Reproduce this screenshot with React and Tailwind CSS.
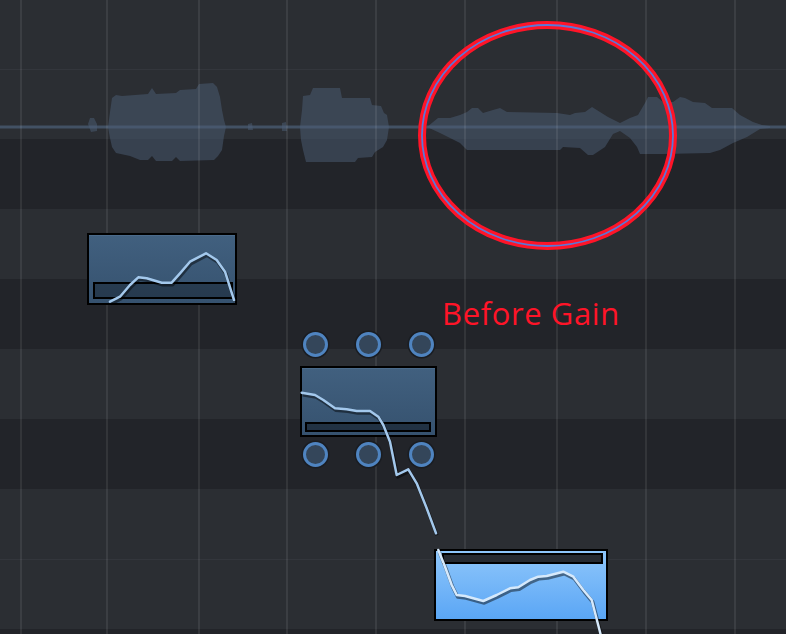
const rows = [
  { h: "h-[69px]", bg: "bg-[#2b2e33]", line: false },
  { h: "h-[70px]", bg: "bg-[#2b2e33]", line: true },
  { h: "h-[70px]", bg: "bg-[#222429]", line: false },
  { h: "h-[70px]", bg: "bg-[#2b2e33]", line: false },
  { h: "h-[70px]", bg: "bg-[#222429]", line: false },
  { h: "h-[70px]", bg: "bg-[#2b2e33]", line: false },
  { h: "h-[70px]", bg: "bg-[#222429]", line: false },
  { h: "h-[70px]", bg: "bg-[#2b2e33]", line: false },
  { h: "h-[70px]", bg: "bg-[#2b2e33]", line: true },
  { h: "h-[70px]", bg: "bg-[#222429]", line: false },
];

const cols = ["w-[86px]", "w-[92px]", "w-[88px]", "w-[89px]", "w-[89px]", "w-[92px]", "w-[89px]", "w-[89px]"];

// waveform shapes
const blob1 =
  "M108,127 L110,112 L112,98 L116,95 L122,96 L148,94 L152,88 L156,94 L176,93 L180,90 L196,89 L199,84 L213,83 L217,87 L220,97 L222,110 L224,120 L226,127 L224,136 L222,150 L218,156 L214,160 L180,161 L176,157 L172,161 L156,161 L152,156 L148,160 L140,160 L130,156 L116,153 L112,147 L110,138 Z";
const blob2 =
  "M300,127 L302,110 L303,96 L310,95 L313,88 L340,88 L342,98 L370,98 L372,105 L381,106 L384,113 L387,115 L389,127 L387,140 L383,147 L375,152 L372,157 L358,158 L355,162 L306,162 L303,150 L301,140 Z";
const blob3 =
  "M427,127 L438,118 L450,118 L460,115 L467,112 L472,108 L478,108 L483,113 L493,110 L500,108 L507,112 L557,113 L570,115 L575,113 L585,112 L592,107 L600,112 L608,117 L620,123 L630,118 L638,115 L645,103 L648,97 L657,97 L663,102 L673,102 L680,97 L685,98 L693,102 L705,103 L712,108 L732,108 L740,115 L753,122 L762,125 L770,126 L770,128 L760,129 L747,137 L733,143 L720,150 L710,153 L663,154 L640,154 L637,147 L630,138 L620,131 L613,134 L605,147 L593,155 L588,155 L580,148 L563,147 L560,150 L467,150 L460,143 L440,133 Z";
const bumps =
  "M88,124 L90,118 L94,118 L97,124 L97,131 L91,132 Z M248,124 L252,123 L253,130 L248,130 Z M282,123 L286,122 L287,131 L282,131 Z";

// pitch curves
const curve1 = "110,301.7 120,296.7 130,285 138.3,277.3 146.7,278.3 161.7,282.7 171.7,282.7 180,273.3 190,261.7 206,253.3 216.7,260 225,271.7 234,300";
const curve2 = "301.7,392.7 315,395 323.3,400 335,408.3 346.7,409.3 356.7,411 370,411 378.3,416.7 383.3,425 390,441.7 396.7,475 408.3,469.3 416.7,483.3 426.7,508.3 436,533.3";
const curve3 = "438.3,550 445,566.7 451.7,585 456.7,595 465,596 483.3,601 496.7,595 510,588.3 518.3,587.3 530,580 538.3,576.7 546.7,576 563.3,571.7 573.3,576.7 583.3,590 591.7,600 599.3,629.3 601,636";

const Curve = ({ points, color }) => (
  <g>
    <polyline points={points} fill="none" stroke="rgba(0,0,0,0.45)" strokeWidth="3.5" strokeLinejoin="round" transform="translate(1,2)" />
    <polyline points={points} fill="none" stroke={color} strokeWidth="2.5" strokeLinejoin="round" strokeLinecap="round" />
  </g>
);

const Handle = () => (
  <div className="w-[25px] h-[25px] rounded-full bg-[#34465a] border-[3px] border-[#4f84c0] shadow-[0_0_0_1.5px_#1a1d22]" />
);

const HandleRow = ({ className }) => (
  <div className={`flex justify-between px-[3px] ${className}`}>
    <Handle />
    <Handle />
    <Handle />
  </div>
);

const App = () => {
  return (
    <div className="relative w-[786px] h-[634px] overflow-hidden bg-[#2b2e33] font-['Open_Sans',sans-serif]">
      <div className="flex flex-col">
        {rows.map((r, i) => (
          <div key={i} className={`${r.h} ${r.bg} ${r.line ? "border-t border-[#33363c]" : ""} shrink-0`} />
        ))}
      </div>

      <svg className="absolute inset-0" width="786" height="634" viewBox="0 0 786 634">
        <rect x="0" y="125.5" width="786" height="3" fill="rgba(75,94,117,0.75)" />
        <path d={blob1} fill="rgba(75,94,117,0.5)" />
        <path d={blob2} fill="rgba(75,94,117,0.5)" />
        <path d={blob3} fill="rgba(75,94,117,0.5)" />
        <path d={bumps} fill="rgba(75,94,117,0.5)" />
      </svg>

      <div className="absolute inset-0 flex pl-[20px]">
        {cols.map((c, i) => (
          <div key={i} className={`${c} h-full border-l-2 border-white/[0.08] shrink-0`} />
        ))}
        <div className="flex-1 h-full border-l-2 border-white/[0.08]" />
      </div>

      {/* note 1 */}
      <div className="absolute left-[87px] top-[233px] w-[150px] h-[72px] border-2 border-black bg-gradient-to-b from-[#41607f] to-[#36526f] shadow-[inset_0_1px_0_#5677997a] flex flex-col justify-end pl-[4px] pb-[4px]">
        <div className="w-[140px] h-[17px] border-2 border-black bg-black/30" />
      </div>

      {/* note 2 with handles */}
      <div className="absolute left-[300px] top-[332px] w-[137px] flex flex-col">
        <HandleRow className="mb-[9px]" />
        <div className="h-[71px] border-2 border-black bg-gradient-to-b from-[#41607f] to-[#36526f] shadow-[inset_0_1px_0_#5677997a] flex flex-col justify-end pl-[3px] pb-[3px]">
          <div className="w-[126px] h-[10px] border-2 border-black bg-black/40" />
        </div>
        <HandleRow className="mt-[5px]" />
      </div>

      {/* note 3 */}
      <div className="absolute left-[434px] top-[549px] w-[174px] h-[72px] border-2 border-black bg-gradient-to-b from-[#8ec6fa] to-[#5aa6f5] pl-[6px] pt-[2px]">
        <div className="w-[161px] h-[11px] border-2 border-black bg-[#262a30]" />
      </div>

      <svg className="absolute inset-0" width="786" height="634" viewBox="0 0 786 634">
        <Curve points={curve1} color="#a3c8ec" />
        <Curve points={curve2} color="#a3c8ec" />
        <Curve points={curve3} color="#d6e9fb" />
        <ellipse cx="547.5" cy="135.5" rx="125.5" ry="110.5" fill="none" stroke="#ff1428" strokeWidth="8" />
        <ellipse cx="547.5" cy="135.5" rx="125.5" ry="110.5" fill="none" stroke="#5a78d8" strokeWidth="1.8" />
      </svg>

      <div className="absolute left-[442px] top-[293px] text-[31px] leading-[40px] tracking-[0.6px] text-[#ff1428]">
        Before Gain
      </div>
    </div>
  );
};

export default App;
